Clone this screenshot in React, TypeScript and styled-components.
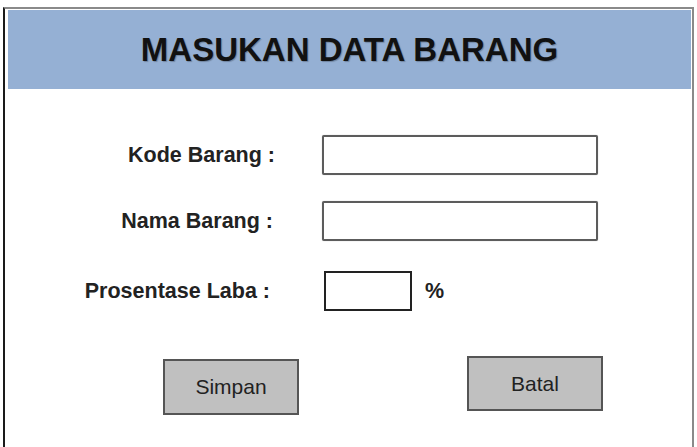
import React from 'react';
import styled, { createGlobalStyle } from 'styled-components';

const GlobalStyle = createGlobalStyle`
    html, body {
        margin: 0;
        padding: 0;
        background: #ffffff;
    }
    body {
        font-family: "Liberation Sans", Arial, sans-serif;
    }
`;

const Frame = styled.div`
    box-sizing: border-box;
    width: 691px;
    height: 440px;
    margin: 7px 0 0 3px;
    padding: 1px 1px 0 3px;
    border: 2px solid #8a8a8a;
    border-left-color: #1a1a1a;
    border-bottom: none;
    display: flex;
    flex-direction: column;
`;

const Header = styled.div`
    height: 79px;
    background-color: #95b0d4;
    display: flex;
    align-items: center;
    justify-content: center;
`;

const Title = styled.h1`
    margin: 0;
    font-size: 33px;
    font-weight: bold;
    color: #111;
    text-shadow: 1px 1px 1px rgba(0, 0, 0, 0.25);
`;

const Form = styled.div`
    display: grid;
    grid-template-columns: 267px auto;
    column-gap: 47px;
    row-gap: 26px;
    align-items: center;
    margin-top: 46px;
`;

const Label = styled.label<{ $top?: number; $inset?: number }>`
    justify-self: end;
    margin-top: ${p => p.$top ?? 0}px;
    margin-right: ${p => p.$inset ?? 0}px;
    font-size: 21.5px;
    font-weight: bold;
    color: #222;
    white-space: nowrap;
`;

const Field = styled.div<{ $top?: number }>`
    display: flex;
    align-items: center;
    gap: 13px;
    margin-top: ${p => p.$top ?? 0}px;
`;

const TextBox = styled.div<{ $width: number; $dark?: boolean }>`
    box-sizing: border-box;
    width: ${p => p.$width}px;
    height: 40px;
    margin-left: ${p => (p.$dark ? 2 : 0)}px;
    border: 2px solid ${p => (p.$dark ? '#222' : '#5c5c5c')};
    border-radius: ${p => (p.$dark ? 0 : 2)}px;
    background: #fff;
    box-shadow: ${p => (p.$dark ? 'none' : '0 0 1px rgba(0,0,0,0.35)')};
`;

const Unit = styled.span`
    font-size: 21.5px;
    font-weight: bold;
    color: #222;
`;

const Actions = styled.div`
    display: flex;
    align-items: flex-start;
    gap: 168px;
    margin-top: 48px;
    padding-left: 155px;
`;

const Button = styled.button<{ $raise?: number }>`
    box-sizing: border-box;
    width: 136px;
    height: ${p => (p.$raise ? 55 : 56)}px;
    margin-top: ${p => -(p.$raise ?? 0)}px;
    background-color: #c0c0c0;
    border: 2px solid #555;
    border-radius: 0;
    font-family: "Liberation Sans", Arial, sans-serif;
    font-size: 21px;
    color: #222;
    padding: 0;
`;

const App: React.FC = () => {
    return (
        <>
            <GlobalStyle />
            <Frame>
                <Header>
                    <Title>MASUKAN DATA BARANG</Title>
                </Header>
                <Form>
                    <Label>Kode Barang :</Label>
                    <Field>
                        <TextBox $width={276} />
                    </Field>
                    <Label $inset={2}>Nama Barang :</Label>
                    <Field>
                        <TextBox $width={276} />
                    </Field>
                    <Label $top={4} $inset={5}>Prosentase Laba :</Label>
                    <Field $top={4}>
                        <TextBox $width={88} $dark />
                        <Unit>%</Unit>
                    </Field>
                </Form>
                <Actions>
                    <Button>Simpan</Button>
                    <Button $raise={3}>Batal</Button>
                </Actions>
            </Frame>
        </>
    );
};

export default App;
